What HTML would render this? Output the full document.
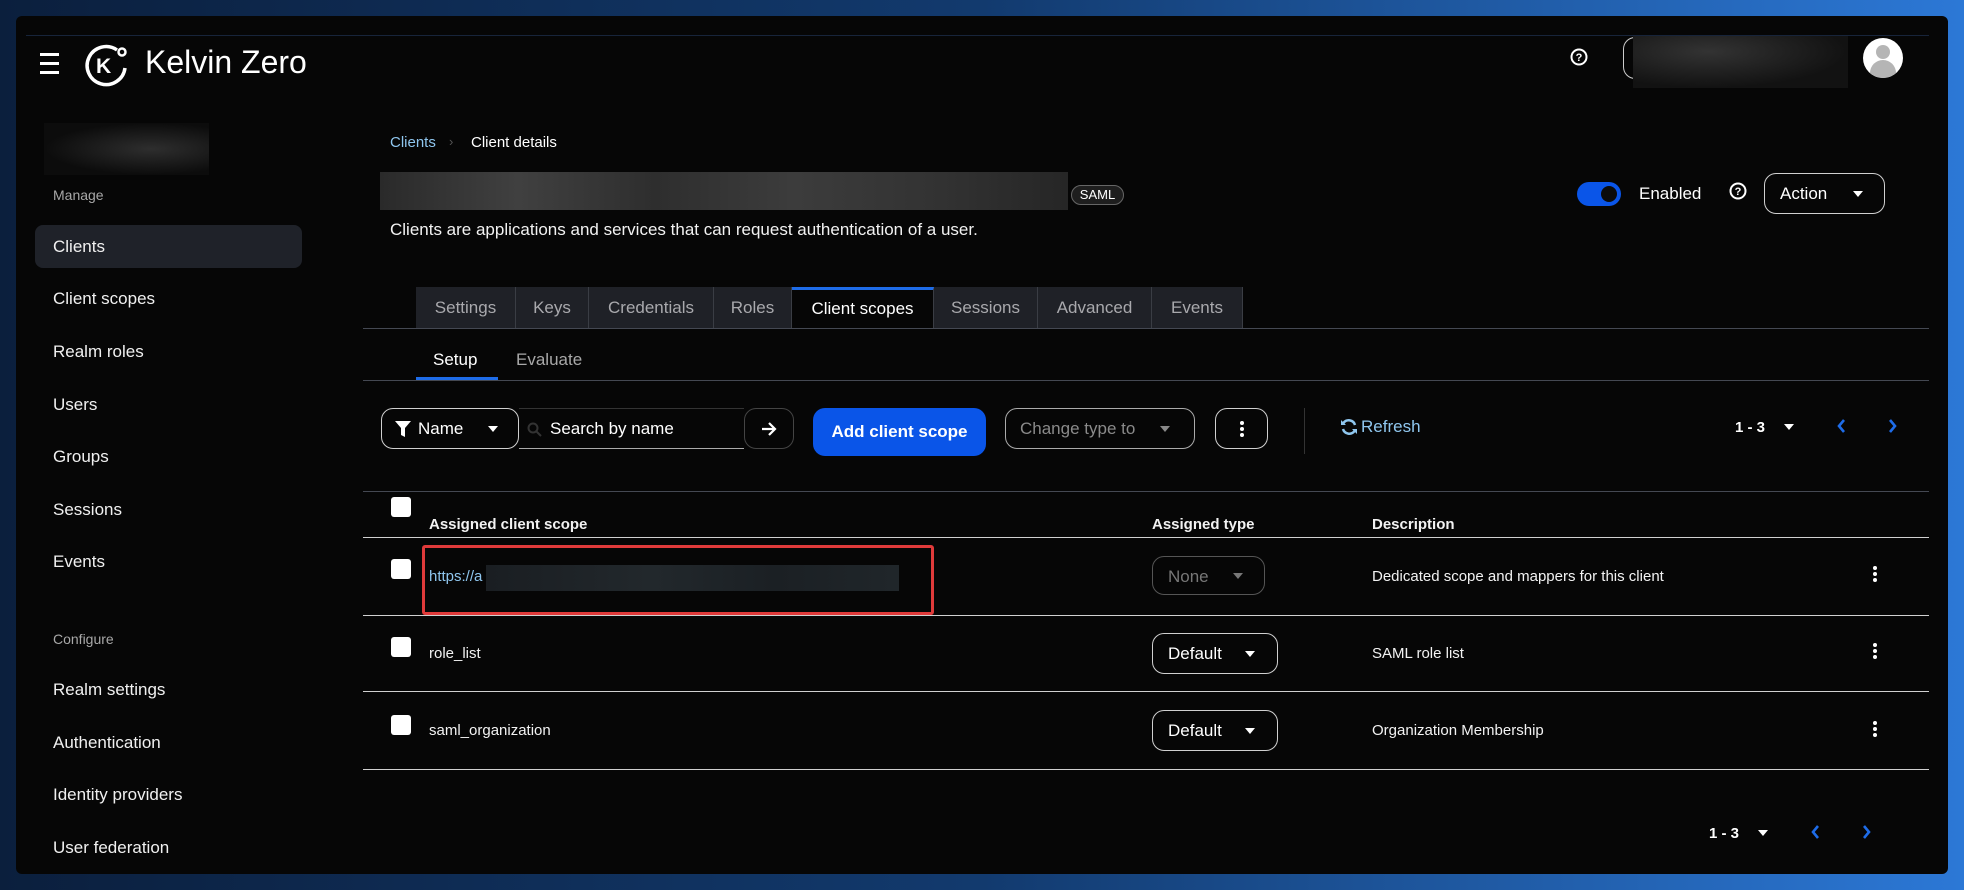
<!DOCTYPE html>
<html><head><meta charset="utf-8"><style>
*{box-sizing:border-box;margin:0;padding:0}
body{width:1964px;height:890px;overflow:hidden;background:linear-gradient(90deg,#0b1f3d 0%,#123a6e 50%,#2c78d6 100%);font-family:"Liberation Sans",sans-serif;color:#fff;position:relative}
.win{position:absolute;left:16px;top:16px;width:1932px;height:858px;background:#060606;border-radius:6px;overflow:hidden}
.a{position:absolute;white-space:nowrap}
.nav{font-size:17px;color:#f0f0f0}
.gray{color:#a8a8a8}
.btn{position:absolute;border:1px solid #d0d0d0;border-radius:12px}
.caret{display:inline-block;width:0;height:0;border-left:5px solid transparent;border-right:5px solid transparent;border-top:6px solid #fff}
.tab{position:absolute;height:41px;background:#1f2127;border-right:1px solid #3a3d44;color:#a9a9ad;font-size:17px;text-align:center;line-height:41px}
.line{position:absolute;height:1px;background:#d0d0d0}
.cb{position:absolute;width:20px;height:20px;background:#fff;border-radius:3px}
.t{font-size:15px;color:#f2f2f2}
</style></head><body>
<div class="win">
<div class="a" style="left:10px;top:19px;width:1903px;height:1px;background:#17243a"></div>
<div class="a" style="left:24px;top:37px;width:19px;height:3px;background:#fff"></div>
<div class="a" style="left:24px;top:46px;width:19px;height:3px;background:#fff"></div>
<div class="a" style="left:24px;top:55px;width:19px;height:3px;background:#fff"></div>
<svg class="a" style="left:68px;top:26px" width="46" height="46" viewBox="0 0 46 46"><path d="M33 8 A19 19 0 1 0 41 26" fill="none" stroke="#fff" stroke-width="3.5"/><circle cx="38" cy="10" r="3.5" fill="none" stroke="#fff" stroke-width="2.5"/><text x="12" y="31" font-family="Liberation Sans" font-weight="bold" font-size="21" fill="#fff">K</text></svg>
<div class="a" style="left:129px;top:28px;font-size:32px;color:#fff">Kelvin Zero</div>
<svg class="a" style="left:1554px;top:32px" width="18" height="18" viewBox="0 0 18 18"><circle cx="9" cy="9" r="7.5" fill="none" stroke="#fff" stroke-width="2"/><text x="9" y="13" text-anchor="middle" font-size="11" font-weight="bold" fill="#fff" font-family="Liberation Sans">?</text></svg>
<div class="a" style="left:1607px;top:21px;width:40px;height:42px;border:1px solid #ccc;border-right:none;border-radius:12px 0 0 12px"></div>
<div class="a" style="left:1617px;top:20px;width:215px;height:52px;background:radial-gradient(ellipse at 35% 30%,#333,#121212 70%)"></div>
<div class="a" style="left:1847px;top:22px;width:40px;height:40px;border-radius:50%;background:#fff;overflow:hidden"><div class="a" style="left:13px;top:7px;width:14px;height:14px;border-radius:50%;background:#b5b5b5"></div><div class="a" style="left:7px;top:22px;width:26px;height:20px;border-radius:13px 13px 0 0;background:#b5b5b5"></div></div>
<div class="a" style="left:28px;top:107px;width:165px;height:52px;background:radial-gradient(ellipse at 65% 50%,#2e2e2e,#0c0c0c 70%)"></div>
<div class="a gray" style="left:37px;top:171px;font-size:14px">Manage</div>
<div class="a" style="left:19px;top:209px;width:267px;height:43px;background:#1f2229;border-radius:8px"></div>
<div class="a nav" style="left:37px;top:221px">Clients</div>
<div class="a nav" style="left:37px;top:273px">Client scopes</div>
<div class="a nav" style="left:37px;top:326px">Realm roles</div>
<div class="a nav" style="left:37px;top:379px">Users</div>
<div class="a nav" style="left:37px;top:431px">Groups</div>
<div class="a nav" style="left:37px;top:484px">Sessions</div>
<div class="a nav" style="left:37px;top:536px">Events</div>
<div class="a gray" style="left:37px;top:615px;font-size:14px">Configure</div>
<div class="a nav" style="left:37px;top:664px">Realm settings</div>
<div class="a nav" style="left:37px;top:717px">Authentication</div>
<div class="a nav" style="left:37px;top:769px">Identity providers</div>
<div class="a nav" style="left:37px;top:822px">User federation</div>
<div class="a" style="left:374px;top:118px;font-size:15px;color:#8fc6ee">Clients</div>
<div class="a" style="left:433px;top:118px;font-size:13px;color:#555">›</div>
<div class="a" style="left:455px;top:118px;font-size:15px;color:#fff">Client details</div>
<div class="a" style="left:364px;top:156px;width:688px;height:38px;background:linear-gradient(90deg,#2a2a2a,#404040 20%,#2e2e2e 40%,#3c3c3c 60%,#333 80%,#262626)"></div>
<div class="a" style="left:1055px;top:169px;width:53px;height:20px;border:1px solid #666;border-radius:10px;background:#1e1e1e;font-size:13px;text-align:center;line-height:18px">SAML</div>
<div class="a" style="left:374px;top:204px;font-size:17px;color:#f2f2f2">Clients are applications and services that can request authentication of a user.</div>
<div class="a" style="left:1561px;top:166px;width:44px;height:24px;border-radius:12px;background:#0a55e8"><div class="a" style="left:24px;top:4px;width:16px;height:16px;border-radius:50%;background:#0b0b0b"></div></div>
<div class="a" style="left:1623px;top:168px;font-size:17px">Enabled</div>
<svg class="a" style="left:1713px;top:166px" width="18" height="18" viewBox="0 0 18 18"><circle cx="9" cy="9" r="7.5" fill="none" stroke="#fff" stroke-width="2"/><text x="9" y="13" text-anchor="middle" font-size="11" font-weight="bold" fill="#fff" font-family="Liberation Sans">?</text></svg>
<div class="btn" style="left:1748px;top:157px;width:121px;height:41px"><span class="a" style="left:15px;top:10px;font-size:17px">Action</span><span class="caret a" style="left:88px;top:17px"></span></div>
<div class="tab" style="left:400px;width:100px;top:271px">Settings</div>
<div class="tab" style="left:500px;width:73px;top:271px">Keys</div>
<div class="tab" style="left:573px;width:125px;top:271px">Credentials</div>
<div class="tab" style="left:698px;width:78px;top:271px">Roles</div>
<div class="tab" style="left:776px;width:142px;top:271px;background:#060606;color:#fff;border-top:3px solid #1e6ce8;line-height:37px">Client scopes</div>
<div class="tab" style="left:918px;width:104px;top:271px">Sessions</div>
<div class="tab" style="left:1022px;width:114px;top:271px">Advanced</div>
<div class="tab" style="left:1136px;width:91px;top:271px">Events</div>
<div class="a" style="left:347px;top:312px;width:1566px;height:1px;background:#444852"></div>
<div class="a" style="left:417px;top:334px;font-size:17px">Setup</div>
<div class="a" style="left:500px;top:334px;font-size:17px;color:#a8a8a8">Evaluate</div>
<div class="a" style="left:400px;top:361px;width:82px;height:3px;background:#1e6ce8"></div>
<div class="a" style="left:347px;top:364px;width:1566px;height:1px;background:#444852"></div>
<div class="btn" style="left:365px;top:392px;width:138px;height:41px"><svg class="a" style="left:13px;top:12px" width="16" height="16" viewBox="0 0 16 16"><path d="M0 0H16L10 7V16L6 14V7Z" fill="#fff"/></svg><span class="a" style="left:36px;top:10px;font-size:17px">Name</span><span class="caret a" style="left:106px;top:17px"></span></div>
<div class="a" style="left:503px;top:392px;width:225px;height:41px;border-top:1px solid #333;border-bottom:1px solid #aaa"><svg class="a" style="left:8px;top:13px" width="15" height="15" viewBox="0 0 15 15"><circle cx="6" cy="6" r="4.5" fill="none" stroke="#333" stroke-width="2"/><path d="M9.5 9.5L14 14" stroke="#333" stroke-width="2"/></svg><span class="a" style="left:31px;top:10px;font-size:17px">Search by name</span></div>
<div class="btn" style="left:728px;top:392px;width:50px;height:41px;border-color:#444"><svg class="a" style="left:16px;top:12px" width="16" height="16" viewBox="0 0 16 16"><path d="M1 8H14M8 2L14 8L8 14" fill="none" stroke="#fff" stroke-width="2.2"/></svg></div>
<div class="a" style="left:797px;top:392px;width:173px;height:48px;background:#0a55e8;border-radius:12px;font-size:17px;font-weight:bold;text-align:center;line-height:48px">Add client scope</div>
<div class="btn" style="left:989px;top:392px;width:190px;height:41px;border-color:#aaa"><span class="a" style="left:14px;top:10px;font-size:17px;color:#8a8a8a">Change type to</span><span class="caret a" style="left:154px;top:17px;border-top-color:#888"></span></div>
<div class="btn" style="left:1199px;top:392px;width:53px;height:41px"><svg class="a" style="left:23px;top:11px" width="6" height="18"><circle cx="3" cy="3" r="2" fill="#fff"/><circle cx="3" cy="9" r="2" fill="#fff"/><circle cx="3" cy="15" r="2" fill="#fff"/></svg></div>
<div class="a" style="left:1288px;top:392px;width:1px;height:46px;background:#333"></div>
<svg class="a" style="left:1324px;top:402px" width="18" height="18" viewBox="0 0 18 18"><path d="M15 7A6.5 6.5 0 0 0 3.5 5M3 11A6.5 6.5 0 0 0 14.5 13" fill="none" stroke="#8fc6ee" stroke-width="2.5"/><path d="M1 2V7H6Z M17 16V11H12Z" fill="#8fc6ee"/></svg>
<div class="a" style="left:1345px;top:401px;font-size:17px;color:#8fc6ee">Refresh</div>
<div class="a" style="left:1719px;top:403px;font-size:15px;font-weight:bold">1 - 3</div>
<span class="caret a" style="left:1768px;top:408px"></span>
<svg class="a" style="left:1820px;top:403px" width="10" height="14" viewBox="0 0 10 14"><path d="M8 1L3 7L8 13" fill="none" stroke="#1e6ce8" stroke-width="2.6"/></svg>
<svg class="a" style="left:1872px;top:403px" width="10" height="14" viewBox="0 0 10 14"><path d="M2 1L7 7L2 13" fill="none" stroke="#1e6ce8" stroke-width="2.6"/></svg>
<div class="a" style="left:347px;top:475px;width:1566px;height:1px;background:#444852"></div>
<div class="cb" style="left:375px;top:481px"></div>
<div class="a t" style="left:413px;top:500px;font-weight:bold">Assigned client scope</div>
<div class="a t" style="left:1136px;top:500px;font-weight:bold">Assigned type</div>
<div class="a t" style="left:1356px;top:500px;font-weight:bold">Description</div>
<div class="line" style="left:347px;top:521px;width:1566px"></div>
<div class="cb" style="left:375px;top:543px"></div>
<div class="a" style="left:406px;top:529px;width:512px;height:70px;border:3px solid #e03a3a;border-radius:3px"></div>
<div class="a t" style="left:413px;top:552px;color:#8fc6ee">https://a</div>
<div class="a" style="left:470px;top:549px;width:413px;height:26px;background:linear-gradient(90deg,#1a1e22,#22282c 40%,#1b2024 70%,#20262a)"></div>
<div class="btn" style="left:1136px;top:540px;width:113px;height:39px;border-color:#555"><span class="a" style="left:15px;top:10px;font-size:17px;color:#777">None</span><span class="caret a" style="left:80px;top:16px;border-top-color:#777"></span></div>
<div class="a t" style="left:1356px;top:552px">Dedicated scope and mappers for this client</div>
<svg class="a" style="left:1856px;top:549px" width="6" height="18"><circle cx="3" cy="3" r="2" fill="#fff"/><circle cx="3" cy="9" r="2" fill="#fff"/><circle cx="3" cy="15" r="2" fill="#fff"/></svg>
<div class="line" style="left:347px;top:599px;width:1566px"></div>
<div class="cb" style="left:375px;top:621px"></div>
<div class="a t" style="left:413px;top:629px">role_list</div>
<div class="btn" style="left:1136px;top:617px;width:126px;height:41px"><span class="a" style="left:15px;top:10px;font-size:17px">Default</span><span class="caret a" style="left:92px;top:17px"></span></div>
<div class="a t" style="left:1356px;top:629px">SAML role list</div>
<svg class="a" style="left:1856px;top:626px" width="6" height="18"><circle cx="3" cy="3" r="2" fill="#fff"/><circle cx="3" cy="9" r="2" fill="#fff"/><circle cx="3" cy="15" r="2" fill="#fff"/></svg>
<div class="line" style="left:347px;top:675px;width:1566px"></div>
<div class="cb" style="left:375px;top:699px"></div>
<div class="a t" style="left:413px;top:706px">saml_organization</div>
<div class="btn" style="left:1136px;top:694px;width:126px;height:41px"><span class="a" style="left:15px;top:10px;font-size:17px">Default</span><span class="caret a" style="left:92px;top:17px"></span></div>
<div class="a t" style="left:1356px;top:706px">Organization Membership</div>
<svg class="a" style="left:1856px;top:704px" width="6" height="18"><circle cx="3" cy="3" r="2" fill="#fff"/><circle cx="3" cy="9" r="2" fill="#fff"/><circle cx="3" cy="15" r="2" fill="#fff"/></svg>
<div class="line" style="left:347px;top:753px;width:1566px"></div>
<div class="a" style="left:1693px;top:809px;font-size:15px;font-weight:bold">1 - 3</div>
<span class="caret a" style="left:1742px;top:814px"></span>
<svg class="a" style="left:1794px;top:809px" width="10" height="14" viewBox="0 0 10 14"><path d="M8 1L3 7L8 13" fill="none" stroke="#1e6ce8" stroke-width="2.6"/></svg>
<svg class="a" style="left:1846px;top:809px" width="10" height="14" viewBox="0 0 10 14"><path d="M2 1L7 7L2 13" fill="none" stroke="#1e6ce8" stroke-width="2.6"/></svg>
</div>
</body></html>
